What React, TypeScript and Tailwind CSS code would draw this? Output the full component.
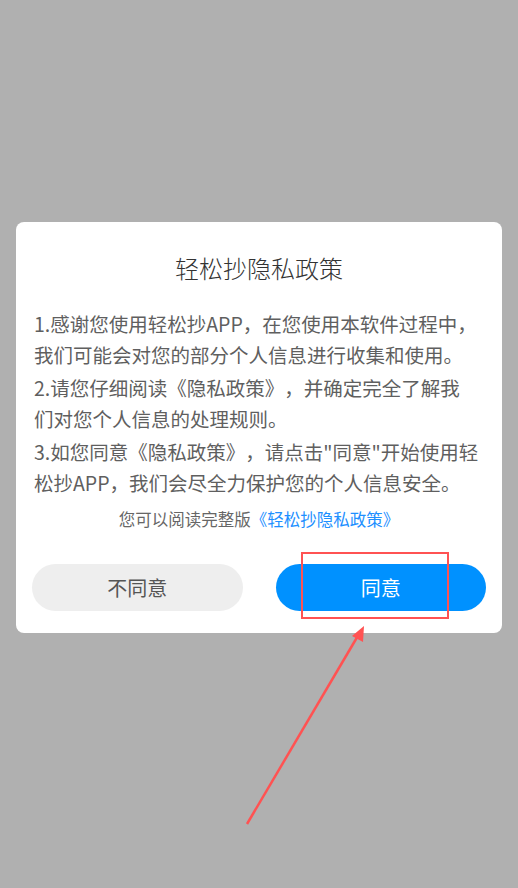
import React from "react";

// each paragraph split where the reference wraps
const paragraphs = [
  ["1.感谢您使用轻松抄APP，在您使用本软件过程中，", "我们可能会对您的部分个人信息进行收集和使用。"],
  ["2.请您仔细阅读《隐私政策》，并确定完全了解我", "们对您个人信息的处理规则。"],
  ['3.如您同意《隐私政策》，请点击"同意"开始使用轻', "松抄APP，我们会尽全力保护您的个人信息安全。"],
];

const App = () => {
  return (
    <div
      className="relative w-full h-[888px] bg-[#b0b0b0] pt-[222px] overflow-hidden"
      style={{ fontFamily: '"Noto Sans CJK SC", "Noto Sans", sans-serif' }}
    >
      {/* Dialog */}
      <div className="mx-4 bg-white rounded-[8px] pt-[30px] pb-[22px]">
        <p className="text-center text-[24px] leading-[32px] text-[#333333] font-light">轻松抄隐私政策</p>

        {/* Body */}
        <div className="mt-[24px] px-[18px] text-[19.5px] leading-[31px] text-[#5f5f5f] whitespace-nowrap [text-spacing-trim:space-all]">
          {paragraphs.map((lines, i) => (
            <p key={i} className={i > 0 ? "mt-[2px]" : ""}>
              {lines[0]}
              <br />
              {lines[1]}
            </p>
          ))}
        </div>

        <p className="mt-[10px] text-center text-[16.5px] leading-[22px] text-[#666666]">
          您可以阅读完整版<span className="text-[#1e90ff]">《轻松抄隐私政策》</span>
        </p>

        {/* Buttons */}
        <div className="mt-[34px] px-4 flex gap-[33px]">
          <button className="flex-1 h-[47px] rounded-full bg-[#eeeeee] text-[20px] text-[#555555]">
            不同意
          </button>
          <button className="flex-1 h-[47px] rounded-full bg-[#0091ff] text-[20px] text-white">
            同意
          </button>
        </div>
      </div>

      {/* Annotation box */}
      <div className="absolute left-[301px] top-[552px] w-[148px] h-[67px] border-2 border-[#ff5252]" />

      {/* Annotation arrow */}
      <svg className="absolute left-0 top-0" width="518" height="888" viewBox="0 0 518 888">
        <line x1="247" y1="824" x2="359" y2="634" stroke="#ff5252" strokeWidth="2.5" />
        <polygon points="364,626 352,636 363,642" fill="#ff5252" />
      </svg>
    </div>
  );
};

export default App;
